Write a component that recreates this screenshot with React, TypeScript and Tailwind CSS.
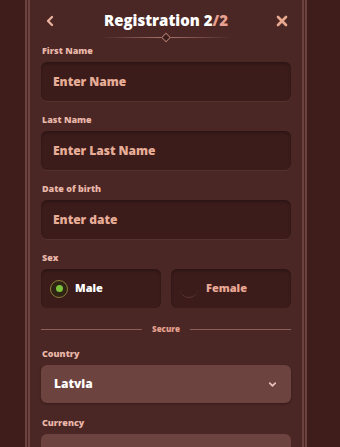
import { ChevronDown, ChevronLeft, X } from "lucide-react";

function Label({ children }: { children: string }) {
  return (
    <div className="text-[9px] font-extrabold text-[#e9b7a9] leading-none mb-[7px] pl-[1px]">
      {children}
    </div>
  );
}

function Field({ label, placeholder }: { label: string; placeholder: string }) {
  return (
    <div className="mb-[14px] shrink-0">
      <Label>{label}</Label>
      <div className="h-[39px] rounded-[6px] bg-[#3b1c1b] shadow-[inset_0_2px_3px_rgba(0,0,0,0.25),0_1px_0_rgba(255,255,255,0.06)] flex items-center px-[12px] text-[12px] font-extrabold text-[#e8ad97]">
        {placeholder}
      </div>
    </div>
  );
}

export default function App() {
  return (
    <div
      className="w-[340px] h-[447px] overflow-hidden bg-[#3e1d1b] flex justify-start"
      style={{ fontFamily: "'Open Sans', Lato, sans-serif" }}
    >
      <div className="ml-[25px] w-[282px] h-full shrink-0 border-x-[5px] border-double border-[#6b423d] bg-[#4a2624] flex flex-col">
        {/* header */}
        <div className="relative shrink-0 h-[44px] flex items-center justify-between px-[12px] pb-[3px]">
          <ChevronLeft className="w-[16px] h-[16px] text-[#eab3a0]" strokeWidth={3.5} />
          <div className="text-[15px] font-extrabold text-white">
            Registration 2<span className="text-[#e8a090]">/2</span>
          </div>
          <X className="w-[16px] h-[16px] text-[#e8a78f]" strokeWidth={4} />
          <div className="absolute left-[70px] right-[70px] bottom-[6px] h-[1px] bg-gradient-to-r from-transparent via-[#a9766b] to-transparent" />
          <div className="absolute left-1/2 -translate-x-1/2 bottom-[3px] w-[7px] h-[7px] rotate-45 bg-[#3a1c1a] border border-[#a9766b]" />
        </div>

        <div className="shrink-0 px-[11px] pt-[2px] flex flex-col">
          <Field label="First Name" placeholder="Enter Name" />
          <Field label="Last Name" placeholder="Enter Last Name" />
          <Field label="Date of birth" placeholder="Enter date" />

          <div className="mb-[15px]">
            <Label>Sex</Label>
            <div className="grid grid-cols-2 gap-[10px]">
              <div className="h-[39px] rounded-[6px] bg-[#3b1c1b] shadow-[inset_0_2px_3px_rgba(0,0,0,0.25)] flex items-center pl-[9px] gap-[7px]">
                <div className="w-[18px] h-[18px] rounded-full border-[1.5px] border-[#8a7a36] bg-[#2f2414] flex items-center justify-center">
                  <div className="w-[7px] h-[7px] rounded-full bg-[#7bc23a]" />
                </div>
                <span className="text-[11px] font-extrabold text-white">Male</span>
              </div>
              <div className="h-[39px] rounded-[6px] bg-[#3b1c1b] shadow-[inset_0_2px_3px_rgba(0,0,0,0.25)] flex items-center pl-[9px] gap-[8px]">
                <div className="w-[18px] h-[18px] rounded-full border-b-[1.5px] border-[#5e3a36]" />
                <span className="text-[11px] font-extrabold text-[#eaa895]">Female</span>
              </div>
            </div>
          </div>

          <div className="flex items-center gap-[10px] mb-[14px]">
            <div className="flex-1 h-[1px] bg-[#8d5f57]" />
            <span className="text-[8px] font-extrabold text-[#e3a08e]">Secure</span>
            <div className="flex-1 h-[1px] bg-[#8d5f57]" />
          </div>

          <div className="mb-[15px]">
            <Label>Country</Label>
            <div className="h-[38px] rounded-[6px] bg-[#6c433e] shadow-[0_1px_2px_rgba(0,0,0,0.3)] flex items-center justify-between px-[13px]">
              <span className="text-[12px] font-extrabold text-white">Latvia</span>
              <ChevronDown className="w-[11px] h-[11px] text-[#e8c6bd]" strokeWidth={3.5} />
            </div>
          </div>

          <div>
            <Label>Currency</Label>
            <div className="h-[38px] rounded-[6px] bg-[#6c433e]" />
          </div>
        </div>
      </div>
    </div>
  );
}
